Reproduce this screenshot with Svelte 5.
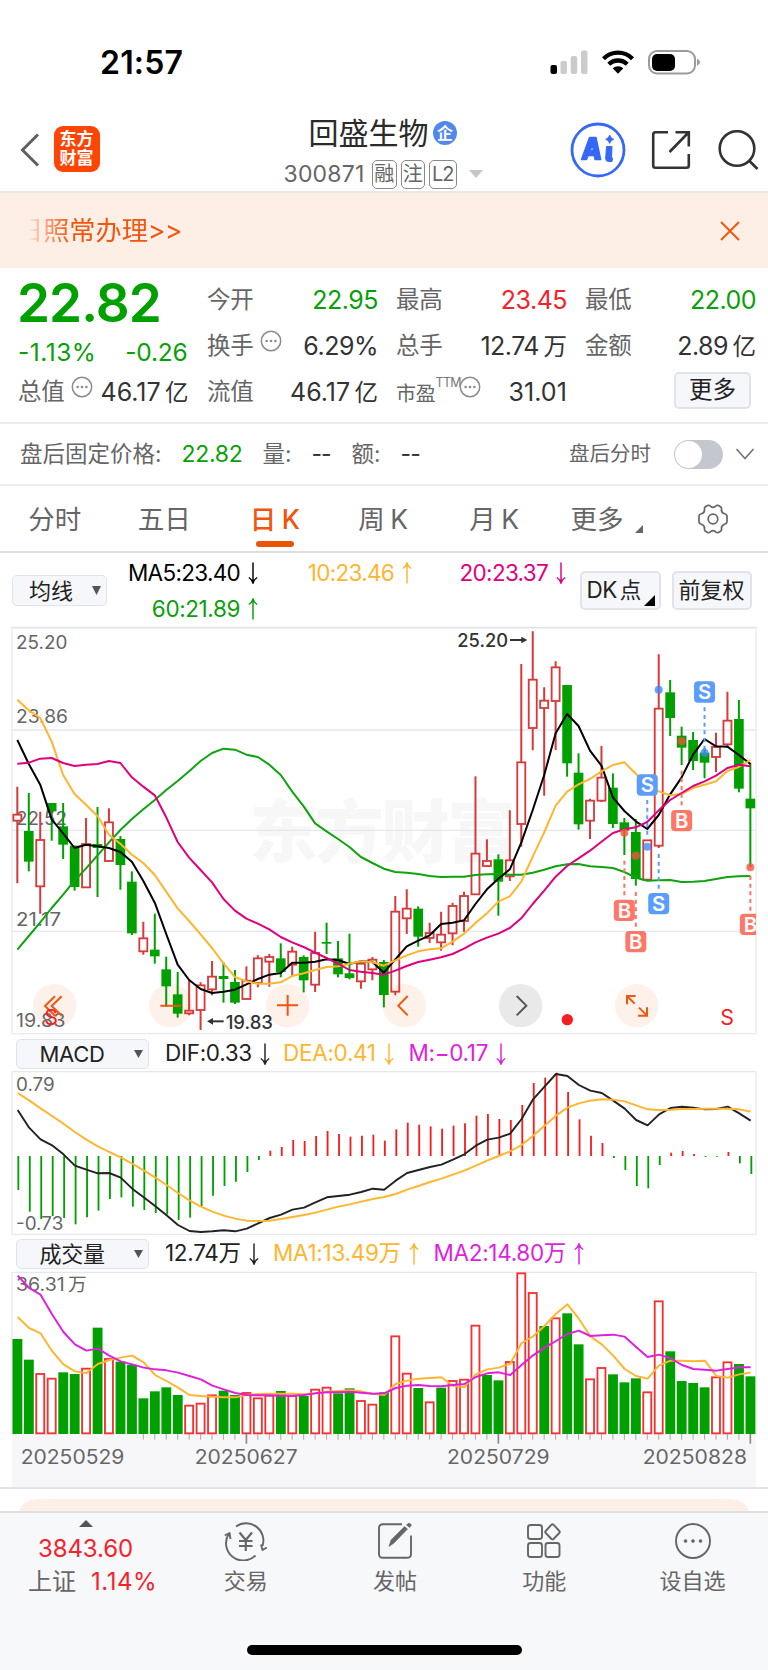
<script>
  // Chart geometry uses a 3-units-per-pixel grid, so 2304 units span the full width.
  const STEP = 34.36;
  const cx = (i) => 52 + STEP * i;
  const line = (values, shift = 0) => values.map((y, i) => `${(cx(i) + shift).toFixed(1)},${y}`).join(' ');

  // [high, body top, body bottom, low, rising]
  const candles = [
    [500,583,603,790,1],[519,633,725,754,0],[575,659,800,881,1],[549,549,574,662,0],[549,619,674,717,0],
    [677,677,801,812,0],[594,671,803,803,1],[561,672,684,831,0],[565,606,724,724,1],[648,657,735,809,0],
    [754,785,940,945,0],[905,954,995,1004,1],[881,989,1009,1031,0],[1010,1048,1099,1160,0],[1056,1123,1181,1193,0],
    [1080,1171,1181,1186,1],[1087,1095,1171,1230,1],[1023,1069,1109,1126,1],[1027,1068,1077,1148,0],[1050,1086,1148,1152,0],
    [1039,1081,1138,1138,1],[1006,1014,1090,1102,1],[1002,1010,1026,1100,1],[970,1015,1056,1072,0],[980,994,1035,1067,1],
    [1006,1011,1081,1117,0],[935,998,1095,1116,1],[908,966,971,1002,0],[963,1015,1063,1072,0],[941,1060,1074,1078,0],
    [1027,1030,1085,1106,1],[1011,1018,1049,1081,1],[1020,1026,1125,1162,0],[828,874,1116,1126,1],[808,865,896,942,1],
    [859,866,950,980,0],[908,938,955,969,1],[875,943,968,992,1],[848,857,941,976,1],[815,827,904,935,1],
    [469,700,824,824,1],[658,722,739,739,1],[703,718,785,887,0],[571,720,770,783,1],[132,426,613,680,1],
    [34,178,325,391,1],[202,241,265,527,1],[124,141,244,390,1],[195,195,430,470,0],[400,458,613,629,0],
    [536,541,603,657,1],[378,472,543,546,1],[460,503,612,624,0],[594,607,632,705,0],[597,636,777,797,0],
    [660,660,780,780,1],[103,265,678,684,1],[180,217,294,348,0],[320,347,383,435,0],[336,360,423,450,0],
    [383,398,428,475,0],[338,380,412,456,1],[215,301,374,383,1],[240,297,506,517,0],[428,536,565,742,0]
  ];
  const ma5 = [360,432,494,598,640,684,674,679,684,696,725,783,848,942,1034,1080,1107,1119,1115,1109,1093,1077,1064,1059,1028,1028,1025,1018,1020,1032,1024,1026,1058,1018,979,962,946,912,908,901,852,808,776,748,668,570,465,340,282,318,392,437,532,573,604,627,585,523,472,404,357,379,380,405,432];
  const ma10 = [239,271,294,365,465,522,554,588,644,671,704,729,765,815,865,903,943,984,1030,1071,1084,1091,1091,1087,1068,1060,1050,1041,1039,1031,1024,1027,1037,1021,1006,994,988,985,965,941,909,880,845,829,785,710,637,557,515,493,477,454,435,427,461,497,514,526,522,504,494,484,453,441,420];
  const ma20 = [431,428,416,414,429,438,434,432,423,429,472,500,526,592,666,713,750,787,837,872,896,911,928,951,967,981,998,1014,1031,1050,1055,1059,1064,1052,1038,1026,1019,1012,1002,986,967,953,941,924,895,852,812,770,738,715,692,665,639,628,622,606,571,540,519,498,484,467,444,434,439];
  const ma60 = [989,948,907,864,824,782,745,706,667,630,597,568,540,510,483,454,423,399,386,389,404,411,434,465,515,559,610,634,657,681,711,729,746,756,758,762,768,771,770,770,765,763,762,764,764,758,749,739,733,732,739,741,744,756,773,782,781,780,786,785,783,777,771,769,768];

  const ZERO = 378;
  const macd = [480,545,567,558,564,583,562,542,507,502,530,540,549,553,570,563,528,497,468,455,426,390,362,351,330,333,318,303,312,320,317,314,332,298,278,284,289,296,287,280,257,252,267,270,225,159,143,128,186,268,317,339,384,420,468,475,405,368,363,372,381,380,366,400,432];
  const dif = [240,293,328,346,373,407,419,430,429,443,476,502,528,556,585,603,606,604,601,604,596,580,564,554,539,533,517,502,498,494,486,476,479,452,429,420,411,404,389,373,347,329,323,311,267,208,170,132,138,165,182,189,212,236,270,286,253,234,230,233,238,237,230,250,272];
  const dea = [189,211,235,258,281,306,329,349,366,382,401,421,442,465,489,511,530,545,557,566,572,573,572,567,561,555,548,539,530,523,515,507,501,492,479,468,456,446,434,422,407,392,378,364,345,317,287,257,233,220,212,208,209,214,226,238,240,239,237,237,236,236,236,238,245];

  const BASE = 597;
  const volume = [312,374,416,430,412,417,400,278,371,380,389,490,469,457,480,511,505,480,467,480,473,489,481,468,482,483,463,457,475,460,497,508,472,303,415,459,501,458,437,433,271,420,436,380,114,173,273,249,235,328,432,398,418,442,430,471,198,349,438,444,457,426,381,387,424];
  const risingVolume = new Set([2,3,6,8,15,16,17,20,21,22,24,26,27,30,31,33,34,36,38,39,40,43,44,45,47,50,51,55,56,61,62]);
  const vma1 = [246,279,295,348,388,409,414,387,375,368,362,382,420,438,458,480,483,485,487,487,480,477,476,476,476,478,475,470,468,466,469,476,480,447,437,431,429,427,452,456,418,403,398,386,324,304,273,236,208,251,304,328,362,402,423,431,391,377,377,379,377,423,428,418,413];
  const vma2 = [122,159,179,238,291,328,347,341,362,379,388,398,403,406,413,423,433,452,463,474,480,481,481,482,482,480,475,472,472,470,473,476,475,459,452,450,453,454,450,447,426,415,412,420,390,361,338,318,297,287,303,301,299,305,336,366,359,370,390,402,404,407,402,397,397];

  // Trade marks: candle index, badge centre, dashed range, dot
  const marks = [
    { i: 60, t: 'S', y: 216, a: 262, b: 392, dot: 398 },
    { i: 55, t: 'S', y: 495, a: 540, b: 646, dot: 680 },
    { i: 56, t: 'S', y: 851, a: 702, b: 808, dot: 209 },
    { i: 53, t: 'B', y: 871, a: 722, b: 828, dot: 638 },
    { i: 54, t: 'B', y: 965, a: 816, b: 920, dot: 707 },
    { i: 58, t: 'B', y: 602, a: 452, b: 558, dot: 364 },
    { i: 64, t: 'B', y: 913, a: 768, b: 872, dot: 742 }
  ];
  const priceLabels = [['25.20', 88, 150], ['23.86', 310, 152], ['22.52', 615, 149], ['21.17', 917, 131], ['19.83', 1220, 144]];
  const dates = [['20250529', 62, 311], ['20250627', 584, 309], ['20250729', 1341, 308], ['20250828', 1928, 313]];
</script>

{#snippet arrow(up)}
  <svg class="arrow" viewBox="0 0 10 22" width="10" height="22">
    <path d={up ? 'M5 21.500V1M.8 6.500Q4 4.500 5 1Q6 4.500 9.200 6.500' : 'M5 .5V21M.8 15.500Q4 17.500 5 21Q6 17.500 9.200 15.500'} />
  </svg>
{/snippet}

{#snippet more()}
  <svg class="more-dot" viewBox="0 0 22 22" width="22" height="22">
    <circle cx="11" cy="11" r="9.700" fill="none" stroke="#8b8b8b" stroke-width="1.500" />
    <circle cx="6.600" cy="11" r="1.300" /><circle cx="11" cy="11" r="1.300" /><circle cx="15.400" cy="11" r="1.300" />
  </svg>
{/snippet}

<div class="page">
  <div class="status">
    <span class="time">21:57</span>
    <svg class="signal" width="152" height="28" viewBox="0 0 152 28">
      <rect x=".5" y="16" width="6.500" height="9" rx="2" />
      <g fill="#cbcbcb">
        <rect x="10.500" y="12" width="6.500" height="13" rx="2" />
        <rect x="20.700" y="7" width="6.500" height="18" rx="2" />
        <rect x="31" y="1.500" width="6.500" height="23.500" rx="2" />
      </g>
      <g fill="none" stroke="#000" stroke-width="4.300">
        <path d="M53.500 9.700A20.500 20.500 0 0 1 82.500 9.700" />
        <path d="M58.800 15.300A13 13 0 0 1 77.200 15.300" />
      </g>
      <path d="M62.700 19.300A8 8 0 0 1 73.300 19.300L68 24.700Z" />
      <rect x="99" y="2" width="46" height="22.500" rx="8" fill="none" stroke="#9b9b9b" stroke-width="2" />
      <rect x="102" y="5" width="23" height="17" rx="5" />
      <path d="M147 9.500Q150 11 150 13.300Q150 15.500 147 17Z" fill="#9b9b9b" />
    </svg>
  </div>

  <header>
    <svg class="back" width="20" height="34" viewBox="0 0 20 34"><path d="M18 1.500L2.500 17L18 32.500" fill="none" stroke="#606060" stroke-width="3" /></svg>
    <div class="logo"><span>东方</span><span>财富</span></div>
    <div class="title">
      <div class="name">回盛生物<span class="corp">企</span></div>
      <div class="code">
        <span class="num">300871</span>
        <span class="tag">融</span><span class="tag">注</span><span class="tag l2">L2</span>
        <svg width="14" height="8" viewBox="0 0 14 8"><path d="M0 0H14L7 8Z" fill="#c6c6c6" /></svg>
      </div>
    </div>
    <div class="tools">
      <svg width="56" height="56" viewBox="0 0 56 56">
        <circle cx="28" cy="28" r="26" fill="none" stroke="#3568f8" stroke-width="2.800" />
        <g fill="#3568f8" stroke="#3568f8" stroke-linejoin="round">
          <path d="M19.500 15.500H26L30.700 37.500H25L24.300 33.500H18.300L16.500 37.500H11.500ZM20 28.700H23.300L22.700 22.700Z" fill-rule="evenodd" stroke-width="1.400" />
          <path d="M36.500 24.500H42L41.500 36H42.500L42 39.500H38.500Q35.500 39.500 35.700 36Z" stroke-width="1" />
          <path d="M39.700 13Q40.700 16.300 43.700 17.300Q40.700 18.300 39.700 21.500Q38.700 18.300 35.700 17.300Q38.700 16.300 39.700 13Z" stroke-width=".8" />
        </g>
      </svg>
      <svg width="40" height="40" viewBox="0 0 40 40" fill="none" stroke="#333" stroke-width="2.600">
        <path d="M17 2.200H4.500Q2.200 2.200 2.200 4.500V35.500Q2.200 37.800 4.500 37.800H35.500Q37.800 37.800 37.800 35.500V24M24.500 2.200H37.800V16.500M37.500 2.500L18.500 22" />
      </svg>
      <svg width="42" height="40" viewBox="0 0 42 40" fill="none" stroke="#333" stroke-width="2.600">
        <circle cx="20" cy="18.500" r="17.300" /><path d="M31.500 30L40.500 39" />
      </svg>
    </div>
  </header>

  <div class="banner">
    <div class="notice"><span>日照常办理<i>&gt;&gt;</i></span></div>
    <svg width="20" height="20" viewBox="0 0 20 20"><path d="M1 1L19 19M19 1L1 19" stroke="#f2560e" stroke-width="1.900" /></svg>
  </div>

  <section class="quote">
    <div class="lead">
      <div class="price">22.82</div>
      <div class="chg"><span>-1.13%</span><span>-0.26</span></div>
      <div class="cell third"><b>总值</b>{@render more()}<em class="wide">46.17<u>亿</u></em></div>
    </div>
    <div class="cells">
      <div class="cell"><b>今开</b><em class="g">22.95</em></div>
      <div class="cell"><b>最高</b><em class="r">23.45</em></div>
      <div class="cell"><b>最低</b><em class="g">22.00</em></div>
      <div class="cell"><b>换手</b>{@render more()}<em>6.29%</em></div>
      <div class="cell"><b>总手</b><em>12.74<u>万</u></em></div>
      <div class="cell"><b>金额</b><em>2.89<u>亿</u></em></div>
      <div class="cell"><b>流值</b><em class="wide">46.17<u>亿</u></em></div>
      <div class="cell pe"><b>市盈</b><sup>TTM</sup>{@render more()}<em>31.01</em></div>
      <div class="cell"><span class="btn big">更多</span></div>
    </div>
  </section>

  <section class="after">
    <span class="lbl">盘后固定价格:</span><span class="val g">22.82</span>
    <span class="lbl">量:</span><span class="val dash">--</span>
    <span class="lbl">额:</span><span class="val dash">--</span>
    <span class="sw-lbl">盘后分时</span>
    <span class="switch"></span>
    <svg width="20" height="12" viewBox="0 0 20 12"><path d="M1.500 1L10 10.500L18.500 1" fill="none" stroke="#777" stroke-width="1.700" /></svg>
  </section>

  <nav class="tabs">
    <span>分时</span><span>五日</span><span class="on">日<i>K</i></span><span>周<i>K</i></span><span>月<i>K</i></span>
    <span>更多<svg width="8" height="8" viewBox="0 0 8 8"><path d="M8 0V8H0Z" fill="#666" /></svg></span>
    <svg class="gear" width="32" height="32" viewBox="0 0 32 32" fill="none" stroke="#666" stroke-width="1.700" stroke-linejoin="round">
      <path d="M11 2.300Q12.500 2 13.500 3.300Q16 5.300 18.500 3.300Q19.500 2 21 2.300L23.500 3.700Q24.800 4.500 24.500 6Q24 9.800 27.700 10.800Q29.700 11.300 30 13V19Q29.700 20.700 27.700 21.200Q24 22.200 24.500 26Q24.800 27.500 23.500 28.300L21 29.700Q19.500 30 18.500 28.700Q16 26.700 13.500 28.700Q12.500 30 11 29.700L8.500 28.300Q7.200 27.500 7.500 26Q8 22.200 4.300 21.200Q2.300 20.700 2 19V13Q2.300 11.300 4.300 10.800Q8 9.800 7.500 6Q7.200 4.500 8.500 3.700Z" />
      <circle cx="16" cy="16" r="4.800" />
    </svg>
  </nav>

  <section class="ma">
    <span class="btn sel short">均线<svg width="9" height="9" viewBox="0 0 9 9"><path d="M0 0H9L4.500 9Z" /></svg></span>
    <div class="mas">
      <span class="k">MA5:23.40{@render arrow(false)}</span>
      <span class="o">10:23.46{@render arrow(true)}</span>
      <span class="p">20:23.37{@render arrow(false)}</span>
      <span class="g">60:21.89{@render arrow(true)}</span>
    </div>
    <span class="btn dk">DK<u>点</u><svg width="11" height="11" viewBox="0 0 11 11"><path d="M11 0V11H0Z" /></svg></span>
    <span class="btn fq">前复权</span>
  </section>

  <svg class="chart" width="768" height="416" viewBox="0 0 2304 1248">
    <defs><clipPath id="plot"><rect x="36" y="20" width="2232" height="1224" /></clipPath></defs>
    <text class="wm" x="748" y="712" textLength="800">东方财富</text>
    <g stroke="#e4e7ef" stroke-width="4">
      <path d="M36 330H2268M36 631H2268M36 934H2268" stroke-width="4" />
      <path d="M34 23H2270" stroke="#dfe2ea" stroke-width="5" />
      <path d="M36 23V1241H2268V23" fill="none" stroke="#e9eaee" />
    </g>
    <g fill="#fef1ea">
      {#each [164, 512, 863, 1213, 1910] as x}<circle cx={x} cy="1157" r="65" />{/each}
      <circle cx="1562" cy="1157" r="65" fill="#e9e9e9" />
    </g>
    <g class="axis">
      {#each priceLabels as [t, y, w]}<text x="48" {y} textLength={w + 4} lengthAdjust="spacingAndGlyphs">{t}</text>{/each}
    </g>
    {#each candles as [h, t, b, l, up], i}
      {#if up}
        <g stroke="#d63a3a" fill="none">
          <path d="M{cx(i)} {h}V{t}M{cx(i)} {b}V{l}" stroke-width="6" />
          <rect x={cx(i) - 12} y={t + 1} width="24" height={Math.max(b - t - 2, 4)} stroke-width="5.500" />
        </g>
      {:else}
        <path d="M{cx(i)} {h}V{l}" stroke="#00a000" stroke-width="6" />
        <rect x={cx(i) - 14.500} y={t} width="29" height={b - t} fill="#00a000" />
      {/if}
    {/each}
    <g fill="none" stroke-width="6" stroke-linejoin="round">
      <polyline points={line(ma60)} stroke="#0fa30f" />
      <polyline points={line(ma5)} stroke="#000" />
      <polyline points={line(ma10)} stroke="#ffb52e" />
      <polyline points={line(ma20)} stroke="#e0007f" />
    </g>
    <g class="peak">
      <text x="1372" y="81" textLength="152" lengthAdjust="spacingAndGlyphs">25.20</text>
      <path d="M1530 60H1566" /><path d="M1564 50L1582 60L1564 70Z" class="solid" />
      <text x="677" y="1227" textLength="142" lengthAdjust="spacingAndGlyphs">19.83</text>
      <path d="M638 1204H671" /><path d="M639 1194L621 1204L639 1214Z" class="solid" />
    </g>
    <g fill="none" stroke="#f2560e" stroke-width="6">
      <path d="M165 1129L135 1158L165 1187M185 1129L155 1158L185 1187" />
      <path d="M481 1157H543M831 1156H894M863 1125V1187M1223 1128L1195 1157L1223 1186" />
      <path d="M1550 1128L1579 1157L1550 1186" stroke="#555" />
      <path d="M1881 1153V1128H1907M1881 1128L1904 1151M1914 1187H1941V1162M1941 1187L1917 1163" />
    </g>
    <g class="flag"><text x="133" y="1215">S</text><text x="2161" y="1215">S</text><circle cx="1702" cy="1199" r="17" /></g>
    <g clip-path="url(#plot)">
      {#each marks as m}
        {@const x = cx(m.i)}
        {@const blue = m.t === 'S'}
        <path d="M{x} {m.a}V{m.b}" stroke={blue ? '#5b9dff' : '#ff7262'} stroke-width="6" stroke-dasharray="12 11" />
        <circle cx={x} cy={m.dot} r="12" fill={blue ? '#3d88ff' : '#f9513e'} opacity=".78" />
        <rect x={x - 31.500} y={m.y - 32} width="63" height="64" rx="12" fill={blue ? '#5b9dff' : '#ff7767'} />
        <text class="badge" {x} y={m.y + 22}>{m.t}</text>
      {/each}
    </g>
  </svg>

  <div class="ind first">
    <span class="btn sel">MACD<svg width="9" height="8" viewBox="0 0 9 8"><path d="M0 0H9L4.500 8Z" /></svg></span>
    <span class="d" style:width="118px">DIF:0.33{@render arrow(false)}</span>
    <span class="o" style:width="125.500px">DEA:0.41{@render arrow(false)}</span>
    <span class="m">M:−0.17{@render arrow(false)}</span>
  </div>

  <svg class="chart" width="768" height="166" viewBox="0 120 2304 498">
    <rect x="36" y="125" width="2232" height="488" fill="none" stroke="#e6e7ea" stroke-width="3.500" />
    <g class="axis">
      <text x="48" y="182" textLength="116" lengthAdjust="spacingAndGlyphs">0.79</text>
      <text x="48" y="600" textLength="142" lengthAdjust="spacingAndGlyphs">-0.73</text>
    </g>
    {#each macd as y, i}
      <path d="M{cx(i) + 3} {ZERO}V{y}" stroke={y < ZERO ? '#f51d1d' : '#00a000'} stroke-width="5.500" />
    {/each}
    <g fill="none" stroke-width="5.800" stroke-linejoin="round">
      <polyline points={line(dif, 1)} stroke="#222" />
      <polyline points={line(dea, 1)} stroke="#ffb52e" />
    </g>
  </svg>

  <div class="ind">
    <span class="btn sel">成交量<svg width="9" height="8" viewBox="0 0 9 8"><path d="M0 0H9L4.500 8Z" /></svg></span>
    <span class="d" style:width="108px">12.74万{@render arrow(false)}</span>
    <span class="o" style:width="160.500px">MA1:13.49万{@render arrow(true)}</span>
    <span class="m">MA2:14.80万{@render arrow(true)}</span>
  </div>

  <svg class="chart" width="768" height="216" viewBox="0 108 2304 648">
    <rect x="36" y="597" width="2232" height="159" fill="#f7f7fa" />
    <path d="M36 597V112H2268V597" fill="none" stroke="#e6e7ea" stroke-width="3.500" />
    <g class="axis"><text x="48" y="168" textLength="146" lengthAdjust="spacingAndGlyphs">36.31</text><text x="204" y="168" font-size="56">万</text></g>
    {#each volume as y, i}
      {#if risingVolume.has(i)}
        <rect x={cx(i) - 12} y={y + 1} width="24" height={BASE - y - 3} fill="#fff" stroke="#f53030" stroke-width="5.500" />
      {:else}
        <rect x={cx(i) - 14.500} {y} width="29.500" height={BASE - y} fill="#00a000" />
      {/if}
      {#if i > 10}
        <path d="M{cx(i)} {BASE}V{[20, 42, 64].includes(i) ? 626 : 614}" stroke={[20, 42, 64].includes(i) ? '#888' : '#aaa'} stroke-width={[20, 42, 64].includes(i) ? 5 : 3} />
      {/if}
    {/each}
    <g fill="none" stroke-width="5.800" stroke-linejoin="round">
      <polyline points={line(vma1, 1)} stroke="#ffb52e" />
      <polyline points={line(vma2, 1)} stroke="#e01ee0" />
    </g>
    <g class="axis date">
      {#each dates as [t, x, w]}<text {x} y="687" textLength={w} lengthAdjust="spacingAndGlyphs">{t}</text>{/each}
    </g>
  </svg>

  <div class="peek"><div></div></div>

  <footer>
    <div class="index">
      <svg width="14" height="7" viewBox="0 0 14 7"><path d="M7 0L14 7H0Z" fill="#555" /></svg>
      <span class="pt">3843.60</span>
      <span class="row"><b>上证</b>1.14%</span>
    </div>
    <div class="item">
      <svg width="44" height="40" viewBox="0 0 44 40">
        <path d="M12 5.500A17.300 17.300 0 0 1 38.500 25M31.500 34.500A17.300 17.300 0 0 1 5 12.500" />
        <path d="M.8 14.500L5.500 12L6.500 18M42.800 26.500L38.500 29L37 23.500" />
        <path d="M15.500 11.500L21.800 19L28 11.500M21.800 19V30M15 20H28.500M15 25H28.500" stroke-width="2.200" />
      </svg>
      交易
    </div>
    <div class="item">
      <svg width="44" height="40" viewBox="0 0 44 40">
        <path d="M29 3.200H10Q6 3.200 6 7V33Q6 36.800 10 36.800H34Q38 36.800 38 33V14.500" />
        <path d="M16 25.500L18 19L31.500 5.500L34.500 8L21 22ZM33.500 4L35 2.500Q37 1.500 38.500 4L36.500 6.500Z" class="fill" />
      </svg>
      发帖
    </div>
    <div class="item">
      <svg width="44" height="40" viewBox="0 0 44 40">
        <rect x="6" y="4" width="14" height="14" rx="2.500" /><rect x="6" y="22" width="14" height="14" rx="2.500" /><rect x="23.500" y="22" width="14" height="14" rx="2.500" />
        <path d="M29.500 3.700Q30.500 2.900 31.500 3.700L37.300 10Q38.200 11 37.300 12L31.500 18Q30.500 18.800 29.500 18L23.700 12Q22.800 11 23.700 10Z" />
      </svg>
      功能
    </div>
    <div class="item">
      <svg width="44" height="40" viewBox="0 0 44 40">
        <circle cx="22" cy="20" r="17" />
        <g class="fill"><circle cx="14.500" cy="20" r="1.500" /><circle cx="22" cy="20" r="1.500" /><circle cx="29.500" cy="20" r="1.500" /></g>
      </svg>
      设自选
    </div>
    <div class="home"></div>
  </footer>
</div>

<style>
  :global(body) { background: #fff; }
  .page { width: 768px; height: 1670px; overflow: hidden; display: flex; flex-direction: column; font-family: Inter, "Noto Sans CJK SC", sans-serif; color: #333; background: #fff; line-height: 1; white-space: nowrap; }
  .page > * { flex: none; box-sizing: border-box; }
  svg { display: block; flex: none; }
  b, em, i, u { font-weight: inherit; font-style: normal; text-decoration: none; }
  .g { color: #08a008; } .r { color: #f5222a; } .o { color: #ffb52e; } .p { color: #e0007f; } .k { color: #000; } .d { color: #222; } .m { color: #e01ee0; }

  .status { height: 108px; display: flex; justify-content: space-between; padding: 46px 66px 0 100px; }
  .time { font-size: 32px; font-weight: 600; letter-spacing: .2px; line-height: 33px; color: #000; }
  .signal { margin-top: 3px; }

  header { height: 85px; display: flex; border-bottom: 2px solid #e6e8ea; }
  header > * { flex: none; }
  .back { margin: 25px 0 0 20px; }
  .logo { width: 46px; height: 46px; margin: 18px 0 0 13.500px; border-radius: 9px; background: #ff4503; color: #fff; font-size: 17px; font-weight: 700; display: flex; flex-direction: column; align-items: center; justify-content: center; gap: 2px; }
  .title { width: 360px; margin-left: 104px; display: flex; flex-direction: column; }
  .name { display: flex; align-items: center; gap: 4.500px; font-size: 30px; height: 30px; margin: 10px 0 0 105px; color: #2a2a2a; }
  .corp { width: 24px; height: 24px; border-radius: 50%; background: #5288ec; color: #fff; font-size: 16px; font-weight: 700; display: flex; align-items: center; justify-content: center; }
  .code { display: flex; align-items: center; height: 30px; margin: 11px 0 0 80px; gap: 4px; color: #666; }
  .num { font-size: 23px; width: 84.500px; letter-spacing: .2px; }
  .tag { box-sizing: border-box; width: 24.500px; height: 29px; border: 1.500px solid #888; border-radius: 5px; font-size: 20px; display: flex; align-items: center; justify-content: center; }
  .l2 { width: 27.500px; letter-spacing: -1px; }
  .code svg { margin-left: 8px; }
  .tools { display: flex; align-items: center; height: 56px; margin: 14px 0 0 6.500px; }
  .tools svg:nth-child(2) { margin: 0 26px 0 24.500px; }

  .banner { height: 75px; background: #fdeee6; display: flex; align-items: center; justify-content: space-between; padding: 0 28.500px; color: #f2560e; }
  .notice { width: 160px; overflow: hidden; display: flex; font-size: 26.200px; line-height: 34px; -webkit-mask-image: linear-gradient(90deg, transparent 0, rgba(0,0,0,.35) 10px, #000 42px); mask-image: linear-gradient(90deg, transparent 0, rgba(0,0,0,.35) 10px, #000 42px); }
  .notice span { margin-left: -11.500px; }
  .notice i { letter-spacing: -.2px; }

  .quote { height: 156px; display: flex; padding: 0 13px 0 18px; border-bottom: 2px solid #ececee; }
  .lead { width: 170px; margin-right: 19.500px; }
  .price { font-size: 53px; font-weight: 600; letter-spacing: -.9px; color: #00a000; height: 53px; line-height: 53px; margin-top: 8.500px; margin-left: -1px; }
  .chg { display: flex; justify-content: space-between; font-size: 24.500px; letter-spacing: -.2px; color: #08a008; margin-top: 10px; }
  .chg span:first-child { letter-spacing: .5px; }
  .cell.third { margin-top: 5px; }
  .cells { flex: 1; display: grid; grid-template-columns: repeat(3, 170px); column-gap: 19px; grid-auto-rows: 46px; padding-top: 9px; }
  .cell { display: flex; align-items: center; height: 46px; }
  .cell b { font-size: 23.500px; color: #666; letter-spacing: -.3px; }
  .cell em { margin: 0 -1px 0 auto; font-size: 25px; letter-spacing: -.5px; }
  .cell u { font-size: 23.500px; margin-left: 4.500px; letter-spacing: 0; }
  .cell em.wide { letter-spacing: -.05px; }
  .more-dot { fill: #8b8b8b; margin: -10px 0 0 7px; }
  .pe b { font-size: 20px; padding-top: 4px; }
  .pe sup { font-size: 12.500px; line-height: 13px; color: #777; margin-top: -19px; letter-spacing: -.6px; vertical-align: baseline; }
  .pe .more-dot { margin-left: -1px; }
  .cell.pe sup { width: 24.500px; }
  .pe em { letter-spacing: .1px; }
  .btn { box-sizing: border-box; background: #f6f7fa; border: 2px solid #e1e3ea; border-radius: 5px; color: #222; display: flex; align-items: center; justify-content: center; }
  .big { width: 77px; height: 37px; font-size: 23.500px; margin: -4px 4px 0 auto; }

  .after { height: 62px; display: flex; align-items: center; padding: 0 13.500px 0 20px; border-bottom: 2px solid #ececee; font-size: 22.500px; }
  .lbl { color: #666; margin-right: 20px; }
  .after .val { letter-spacing: -.3px; margin-right: 20px; font-size: 23px; }
  .after .dash { letter-spacing: -1px; margin-right: 21px; }
  .sw-lbl { margin-left: auto; color: #666; font-size: 20.500px; }
  .switch { width: 49px; height: 29px; border-radius: 15px; background: #c4c7cd; margin: 0 12px 0 22.500px; display: flex; }
  .switch::before { content: ""; width: 27px; height: 27px; border-radius: 50%; background: #fff; margin: 1px; }

  .tabs { height: 67px; display: flex; border-bottom: 2px solid #dcdee2; color: #666; font-size: 26.500px; }
  .tabs > span { width: 109.500px; height: 66px; display: flex; align-items: center; justify-content: center; }
  .tabs > span i { margin-left: 5.500px; }
  .tabs > span:nth-child(5) { box-sizing: border-box; padding-left: 3px; }
  .tabs > span:nth-child(6) { width: 118px; }
  .tabs span svg { margin: 20px 0 0 11px; }
  .tabs .on { box-sizing: border-box; padding-left: 2px; color: #f0550a; font-weight: 500; position: relative; }
  .tabs .on::after { content: ""; position: absolute; left: 37px; top: 55px; width: 38px; height: 6px; border-radius: 3px; background: #ea5504; }
  .gear { margin: 16.500px 0 0 31.500px; }

  .ma { height: 67px; display: flex; padding-left: 11.500px; }
  .sel { width: 133px; height: 30px; font-size: 22px; justify-content: flex-start; padding-left: 22.500px; border-width: 1.500px; }
  .sel svg { margin-left: auto; margin-right: 5px; fill: #555; }
  .short { width: 95px; height: 31px; margin-top: 22px; padding-left: 16.500px; }
  .mas { width: 454px; margin: 2px 0 0 9px; display: grid; grid-template-columns: 142.500px 154px 154px; grid-auto-rows: 36px; font-size: 22.500px; letter-spacing: -.7px; }
  .mas span { display: flex; align-items: center; justify-content: flex-end; }
  .arrow { fill: none; stroke: currentColor; stroke-width: 1.450; margin-left: 8px; }
  .mas .g { letter-spacing: -.4px; }
  .dk { width: 81px; height: 38.500px; margin: 18px 0 0 10px; font-size: 22.500px; justify-content: flex-start; padding-left: 5px; letter-spacing: -.5px; }
  .dk u { margin-left: 3px; font-size: 21.500px; }
  .dk svg { margin: 21px 0 0 3px; }
  .fq { width: 80px; height: 38.500px; margin: 18px 0 0 11px; font-size: 22px; }

  .chart { font-family: Inter, "Noto Sans CJK SC", sans-serif; }
  .axis { fill: #666; font-size: 54px; }
  .date { font-size: 59px; }
  .wm { fill: #f7f7f7; font-size: 206px; font-weight: 900; }
  .peak { fill: #333; stroke: none; font-size: 54px; font-weight: 500; }
  .peak path { stroke: #333; stroke-width: 6; fill: none; }
  .peak .solid { fill: #333; stroke: none; }
  .flag { fill: #f51d1d; font-size: 64px; }
  .badge { fill: #fff; font-size: 61px; font-weight: 600; text-anchor: middle; }

  .ind { height: 35px; display: flex; align-items: center; padding-left: 16px; font-size: 22.500px; letter-spacing: -.3px; }
  .first { height: 34px; padding-top: 1px; }
  .ind > .btn { margin-right: 16px; }
  .ind > span:not(.btn) { display: flex; align-items: center; }

  .peek { height: 24px; border-top: 2px solid #e3e4e8; padding: 10px 17px 0; overflow: hidden; }
  .peek div { height: 40px; border-radius: 24px; background: #fdeee6; }
  footer { height: 159px; background: #f7f8fa; border-top: 2px solid #dddfe3; display: grid; grid-template-columns: 171px repeat(4, 149.300px); grid-template-rows: 131.500px 10px; }
  .index { display: flex; flex-direction: column; align-items: center; color: #f5222a; padding-top: 6.500px; }
  .index .pt { font-size: 24px; letter-spacing: -.1px; margin-top: 10px; line-height: 24px; }
  .index .row { display: flex; align-items: center; gap: 15px; font-size: 24px; letter-spacing: .5px; margin: 8px 0 0 14px; line-height: 26px; }
  .index b { color: #666; letter-spacing: 0; }
  .item { display: flex; flex-direction: column; align-items: center; color: #666; font-size: 22px; padding-top: 7.500px; gap: 9px; }
  .item:nth-child(5) { padding-right: 2px; }
  .item svg { fill: none; stroke: #666; stroke-width: 1.900; stroke-linejoin: round; }
  .item .fill { fill: #666; stroke: #666; stroke-width: .6; }
  .home { grid-column: 1 / -1; width: 275px; height: 10px; border-radius: 5px; background: #000; justify-self: center; }
</style>
